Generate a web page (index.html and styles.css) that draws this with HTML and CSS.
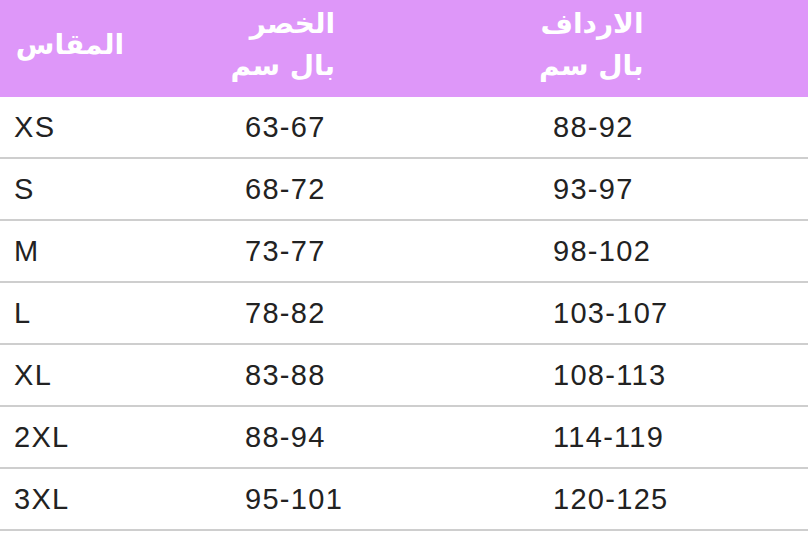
FILE: index.html
```html
<!DOCTYPE html>
<html lang="ar">
<head>
<meta charset="utf-8">
<title>جدول المقاسات</title>
<link rel="stylesheet" href="styles.css">
</head>
<body>
<div class="chart">
  <div class="head">
    <div class="hcell h1"><span dir="rtl">المقاس</span></div>
    <div class="hcell h2"><span dir="rtl">الخصر<br>بال سم</span></div>
    <div class="hcell h3"><span dir="rtl">الارداف<br>بال سم</span></div>
  </div>
  <div class="row"><div class="cell">XS</div><div class="cell">63-67</div><div class="cell">88-92</div></div>
  <div class="row"><div class="cell">S</div><div class="cell">68-72</div><div class="cell">93-97</div></div>
  <div class="row"><div class="cell">M</div><div class="cell">73-77</div><div class="cell">98-102</div></div>
  <div class="row"><div class="cell">L</div><div class="cell">78-82</div><div class="cell">103-107</div></div>
  <div class="row"><div class="cell">XL</div><div class="cell">83-88</div><div class="cell">108-113</div></div>
  <div class="row"><div class="cell">2XL</div><div class="cell">88-94</div><div class="cell">114-119</div></div>
  <div class="row"><div class="cell">3XL</div><div class="cell">95-101</div><div class="cell">120-125</div></div>
</div>
</body>
</html>
```
FILE: styles.css
```css
html, body {
  margin: 0;
  padding: 0;
  background: #ffffff;
}
.chart {
  width: 808px;
  font-family: "Liberation Sans", Arial, sans-serif;
}
.head, .row {
  display: grid;
  grid-template-columns: 231px 308px 1fr;
}
.head {
  height: 97px;
  background: #de97f9;
}
.hcell {
  display: flex;
  align-items: center;
  justify-content: flex-end;
  padding-bottom: 8px;
  color: #ffffff;
  font-family: "DejaVu Sans", sans-serif;
  font-weight: bold;
  font-size: 28px;
  line-height: 42px;
  white-space: nowrap;
}
.hcell span {
  flex: none;
  text-align: right;
}
.h1 { padding-right: 107px; }
.h2 { padding-right: 204px; }
.h3 { padding-right: 169px; }
.row {
  height: 60px;
  border-bottom: 2px solid #cecece;
}
.cell {
  display: flex;
  align-items: center;
  padding-left: 14px;
  font-size: 29px;
  letter-spacing: 1.3px;
  color: #222222;
}
```
